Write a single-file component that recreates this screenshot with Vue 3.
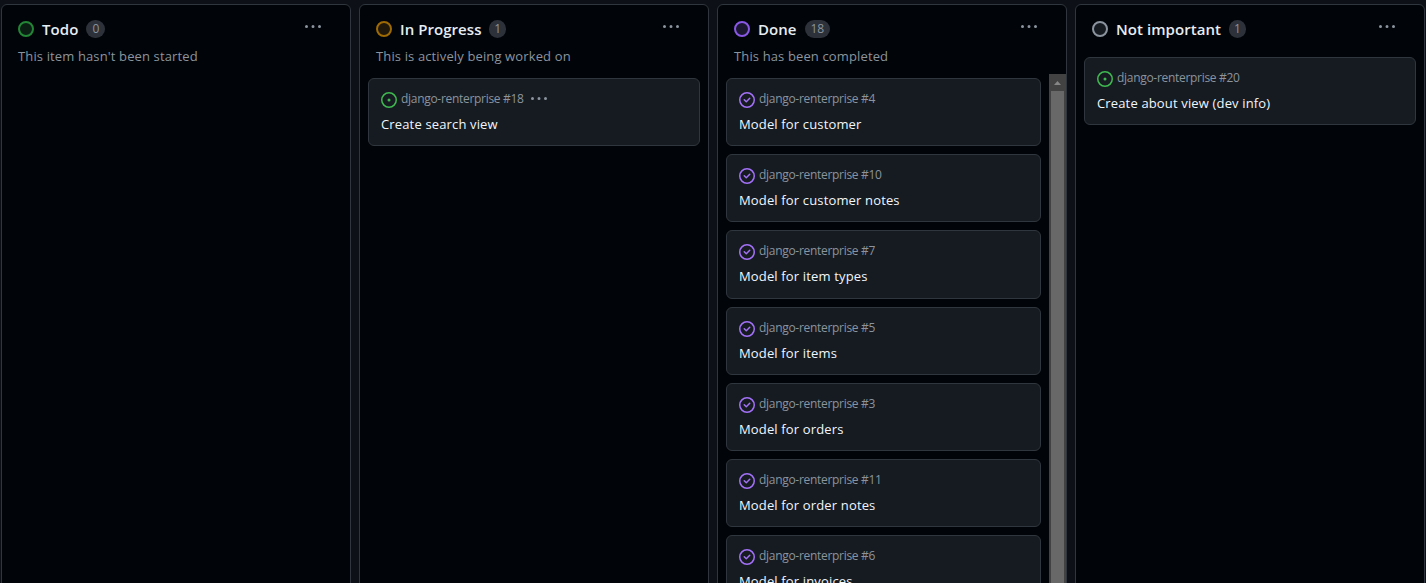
<script setup>
const repo = 'django-renterprise'
const columns = [
  { name: 'Todo', tone: 'green', count: 0, note: "This item hasn't been started", cards: [] },
  {
    name: 'In Progress', tone: 'amber', count: 1, note: 'This is actively being worked on',
    cards: [{ id: 18, title: 'Create search view', open: true, menu: true }]
  },
  {
    name: 'Done', tone: 'purple', count: 18, note: 'This has been completed', scroll: true,
    cards: [
      { id: 4, title: 'Model for customer' },
      { id: 10, title: 'Model for customer notes' },
      { id: 7, title: 'Model for item types' },
      { id: 5, title: 'Model for items' },
      { id: 3, title: 'Model for orders' },
      { id: 11, title: 'Model for order notes' },
      { id: 6, title: 'Model for invoices' }
    ]
  },
  {
    name: 'Not important', tone: 'gray', count: 1, note: '',
    cards: [{ id: 20, title: 'Create about view (dev info)', open: true }]
  }
]
</script>

<template>
  <main class="board">
    <section v-for="col in columns" :key="col.name" class="column">
      <header class="head" :class="{ bare: !col.note }">
        <div class="title-row">
          <span class="ring" :class="col.tone"></span>
          <h2 class="name">{{ col.name }}</h2>
          <span class="count" :class="{ slim: col.count === 1 }">{{ col.count }}</span>
          <svg class="dots" width="16" height="16" viewBox="0 0 16 16">
            <path d="M8 9a1.5 1.5 0 1 0 0-3 1.5 1.5 0 0 0 0 3ZM1.5 9a1.5 1.5 0 1 0 0-3 1.5 1.5 0 0 0 0 3Zm13 0a1.5 1.5 0 1 0 0-3 1.5 1.5 0 0 0 0 3Z" />
          </svg>
        </div>
        <p v-if="col.note" class="note">{{ col.note }}</p>
      </header>
      <div class="body">
        <div class="cards">
          <article v-for="card in col.cards" :key="card.id" class="card">
            <div class="meta">
              <svg v-if="card.open" class="state open" width="16" height="16" viewBox="0 0 16 16">
                <path d="M8 9.5a1.5 1.5 0 1 0 0-3 1.5 1.5 0 0 0 0 3Z" />
                <path d="M8 0a8 8 0 1 1 0 16A8 8 0 0 1 8 0ZM1.5 8a6.5 6.5 0 1 0 13 0 6.5 6.5 0 0 0-13 0Z" />
              </svg>
              <svg v-else class="state closed" width="16" height="16" viewBox="0 0 16 16">
                <path d="M11.28 6.78a.75.75 0 0 0-1.06-1.06L7.25 8.69 5.78 7.22a.75.75 0 0 0-1.06 1.06l2 2a.75.75 0 0 0 1.06 0l3.5-3.5Z" />
                <path d="M16 8A8 8 0 1 1 0 8a8 8 0 0 1 16 0Zm-1.5 0a6.5 6.5 0 1 0-13 0 6.5 6.5 0 0 0 13 0Z" />
              </svg>
              <span class="repo">{{ repo }} #{{ card.id }}</span>
              <svg v-if="card.menu" class="dots" width="16" height="16" viewBox="0 0 16 16">
                <path d="M8 9a1.5 1.5 0 1 0 0-3 1.5 1.5 0 0 0 0 3ZM1.5 9a1.5 1.5 0 1 0 0-3 1.5 1.5 0 0 0 0 3Zm13 0a1.5 1.5 0 1 0 0-3 1.5 1.5 0 0 0 0 3Z" />
              </svg>
            </div>
            <div class="title">{{ card.title }}</div>
          </article>
        </div>
        <div v-if="col.scroll" class="scrollbar">
          <svg class="arrow" width="17" height="17" viewBox="0 0 17 17"><path d="M5 11h7L8.5 7Z" /></svg>
          <div class="thumb"></div>
        </div>
      </div>
    </section>
  </main>
</template>

<style>
html, body { margin: 0; background: #0d1117; overflow: hidden; }
</style>

<style scoped>
.board {
  box-sizing: border-box;
  width: 1426px;
  height: 583px;
  padding: 4px 1px 0;
  display: flex;
  gap: 8px;
  overflow: hidden;
  background: #0d1117;
  font-family: "Open Sans", "Noto Sans", sans-serif;
}
.column {
  box-sizing: border-box;
  flex: 0 0 350px;
  height: 600px;
  border: 1px solid #30363d;
  border-radius: 6px;
  background: #010409;
  display: flex;
  flex-direction: column;
}
.head { padding: 12px 16px 0; }
.head.bare { padding-bottom: 4px; }
.title-row { display: flex; align-items: center; height: 24px; }
.ring {
  box-sizing: border-box;
  width: 16px;
  height: 16px;
  border-radius: 50%;
  border: 2px solid;
}
.green { border-color: #238636; background: #0a1e14; }
.amber { border-color: #9e6a03; background: #1f180b; }
.purple { border-color: #8957e5; background: #1b1730; }
.gray { border-color: #8b949e; background: #161b22; }
.name {
  margin: 0 8px;
  font-size: 15px;
  line-height: 24px;
  font-weight: 600;
  letter-spacing: 0.06px;
  color: #e6edf3;
  white-space: nowrap;
}
.count {
  box-sizing: border-box;
  height: 18px;
  padding: 0 6px;
  border-radius: 9px;
  background: #2d3139;
  color: #8b949e;
  font-size: 12px;
  line-height: 18px;
  font-weight: 500;
  letter-spacing: -0.2px;
  text-align: center;
}
.count.slim { margin-left: -0.5px; padding: 0 5.3px; }
.dots { fill: #8b949e; display: block; }
.title-row .dots { margin: -4px 13px 0 auto; }
.note {
  margin: 5px 0 0;
  font-size: 13px;
  line-height: 20px;
  letter-spacing: 0.13px;
  color: #8b949e;
  white-space: nowrap;
}
.body { flex: 1; min-height: 0; display: flex; margin-top: 8px; }
.cards {
  flex: 1;
  display: flex;
  flex-direction: column;
  gap: 8px;
  padding: 4px 8px 0;
}
.head.bare + .body { margin-top: 7px; }
.head.bare + .body .cards { padding-top: 5px; }
.card {
  box-sizing: border-box;
  flex: 0 0 68.2px;
  padding: 11px 12px 0;
  border: 1px solid #30363d;
  border-radius: 6px;
  background: #161b22;
}
.meta { display: flex; align-items: center; height: 18px; }
.state { display: block; margin-top: 2px; }
.open { fill: #3fb950; }
.closed { fill: #a371f7; }
.repo {
  margin-left: 4px;
  font-size: 12px;
  line-height: 18px;
  letter-spacing: -0.3px;
  color: #8b949e;
  white-space: nowrap;
}
.meta .dots { margin-left: 7px; }
.title {
  margin-top: 6px;
  font-size: 13px;
  line-height: 20px;
  letter-spacing: 0.15px;
  color: #f0f6fc;
  white-space: nowrap;
}
.scrollbar { width: 17px; background: #424242; display: flex; flex-direction: column; }
.arrow { display: block; fill: #868686; }
.thumb { flex: 1; margin: 0 2px; background: #686868; }
</style>
